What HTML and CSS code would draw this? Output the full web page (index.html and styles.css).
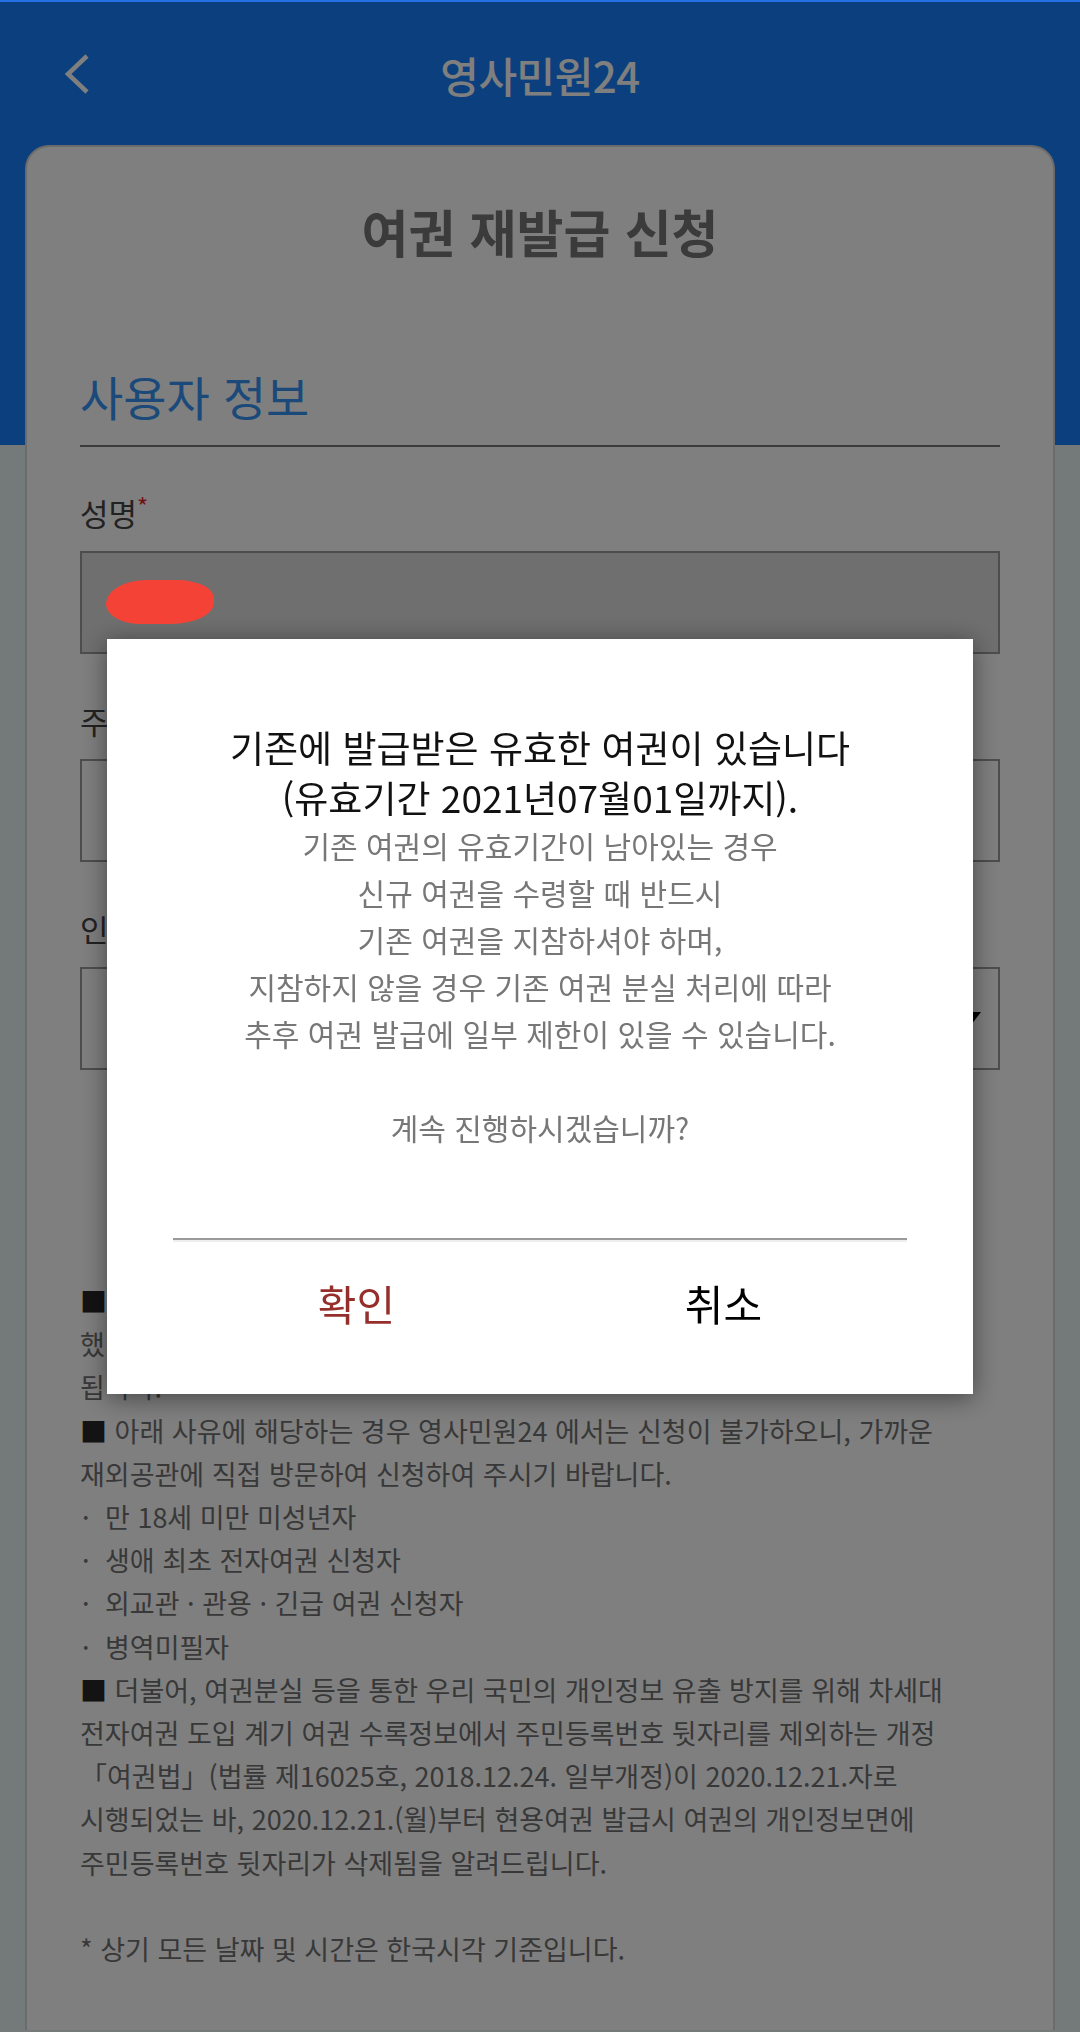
FILE: index.html
```html
<!DOCTYPE html>
<html lang="ko">
<head>
    <meta charset="utf-8">
    <title>영사민원24 - 여권 재발급 신청</title>
    <link rel="stylesheet" href="styles.css">
</head>
<body>
    <div class="status-line"></div>
    <div class="header">
        <div class="nav">
            <a class="back" href="#">
                <svg width="26" height="40" viewBox="0 0 26 40"><polyline points="23,2 4,20 23,38" fill="none" stroke="#fff" stroke-width="4.5"/></svg>
            </a>
            <h1>영사민원24</h1>
            <span></span>
        </div>
    </div>

    <div class="card">
        <h2 class="page-title">여권 재발급 신청</h2>
        <h3 class="section-title">사용자 정보</h3>

        <div class="field">
            <label>성명<span class="req">*</span></label>
            <div class="input readonly"><span class="redact"></span></div>
        </div>
        <div class="field">
            <label>주민등록번호<span class="req">*</span></label>
            <div class="input"></div>
        </div>
        <div class="field">
            <label>인증 수단<span class="req">*</span></label>
            <div class="input select"><span class="arrow"></span></div>
        </div>

        <div class="notice">
            <span class="sq">■</span> 기존 여권의 유효기간이 남아 있는 상태에서 재발급 신청하시는 경우, 신청<br>
            했던 내용과 다르게 기존 여권을 지참하지 않으면 기존 여권은 분실 처리되게<br>
            됩니다.<br>
            <span class="sq">■</span> 아래 사유에 해당하는 경우 영사민원24 에서는 신청이 불가하오니, 가까운<br>
            재외공관에 직접 방문하여 신청하여 주시기 바랍니다.<br>
            <span class="dot">·</span>만 18세 미만 미성년자<br>
            <span class="dot">·</span>생애 최초 전자여권 신청자<br>
            <span class="dot">·</span>외교관 · 관용 · 긴급 여권 신청자<br>
            <span class="dot">·</span>병역미필자<br>
            <span class="sq">■</span> 더불어, 여권분실 등을 통한 우리 국민의 개인정보 유출 방지를 위해 차세대<br>
            전자여권 도입 계기 여권 수록정보에서 주민등록번호 뒷자리를 제외하는 개정<br>
            「여권법」(법률 제16025호, 2018.12.24. 일부개정)이 2020.12.21.자로<br>
            시행되었는 바, 2020.12.21.(월)부터 현용여권 발급시 여권의 개인정보면에<br>
            주민등록번호 뒷자리가 삭제됨을 알려드립니다.<br>
            <br>
            * 상기 모든 날짜 및 시간은 한국시각 기준입니다.
        </div>
    </div>

    <div class="dim">
        <div class="dialog">
            <p class="alert-main">기존에 발급받은 유효한 여권이 있습니다<br>(유효기간 2021년07월01일까지).</p>
            <p class="alert-sub">
                기존 여권의 유효기간이 남아있는 경우<br>
                신규 여권을 수령할 때 반드시<br>
                기존 여권을 지참하셔야 하며,<br>
                지참하지 않을 경우 기존 여권 분실 처리에 따라<br>
                추후 여권 발급에 일부 제한이 있을 수 있습니다.<br>
                <br>
                계속 진행하시겠습니까?
            </p>
            <hr>
            <div class="dialog-buttons">
                <button class="ok">확인</button>
                <button class="cancel">취소</button>
            </div>
        </div>
    </div>
</body>
</html>
```

FILE: styles.css
```css
body { margin: 0; font-family: "Noto Sans CJK KR", "Noto Sans", sans-serif; background-color: #e8f3f3; color: #444; }
h1, h2, h3, p { margin: 0; }

.status-line { position: relative; z-index: 20; height: 2px; background-color: #2570e4; }
.header { height: 443px; background-color: #187efa; }
.nav { height: 143px; padding-top: 1px; box-sizing: border-box; display: grid; grid-template-columns: 1fr auto 1fr; align-items: center; }
.back { padding-left: 64px; display: flex; }
.nav h1 { font-size: 42px; font-weight: 500; color: #fff; letter-spacing: -0.5px; }

.card {
    margin: -300px 25px 0;
    padding: 54px 53px 60px;
    background-color: #fff;
    border: 2px solid #d6d6d6;
    border-bottom: none;
    border-radius: 24px 24px 0 0;
}
.page-title { text-align: center; font-size: 51px; line-height: 60px; font-weight: 700; color: #767676; }
.section-title {
    margin-top: 105px;
    padding-bottom: 19px;
    border-bottom: 2px solid #767676;
    font-size: 47px;
    line-height: 60px;
    font-weight: 400;
    color: #3493f5;
}

.field { margin-top: 45px; }
.field:first-of-type { margin-top: 44px; }
.field label { display: block; font-size: 31px; line-height: 44px; color: #454545; }
.req { color: #e82424; font-size: 24px; vertical-align: top; line-height: 30px; }
.input {
    margin-top: 16px;
    height: 103px;
    box-sizing: border-box;
    border: 2px solid #9b9b9b;
    background-color: #fff;
    display: flex;
    align-items: center;
    padding: 0 24px;
}
.input.readonly { background-color: #dedede; }
.redact {
    position: relative;
    z-index: 20;
    width: 108px;
    height: 44px;
    margin-top: -2px;
    background-color: #f44336;
    border-radius: 40% 36% 42% 34% / 58% 44% 52% 48%;
}
.select { justify-content: flex-end; padding-right: 17px; }
.arrow { width: 0; height: 0; border-left: 10px solid transparent; border-right: 10px solid transparent; border-top: 13px solid #000; }

.notice { margin-top: 209px; font-size: 27px; line-height: 43.2px; color: #717171; }
.notice .sq { color: #262626; }
.notice .dot { display: inline-block; width: 25px; padding-left: 2px; box-sizing: border-box; }

.dim {
    position: fixed;
    top: 0; left: 0; right: 0; bottom: 0;
    z-index: 10;
    background-color: rgba(0, 0, 0, 0.5);
    display: flex;
    align-items: center;
    justify-content: center;
}
.dialog {
    width: 866px;
    box-sizing: border-box;
    padding: 83px 66px 30px;
    background-color: #fff;
    box-shadow: 0 4px 24px rgba(0, 0, 0, 0.45);
    text-align: center;
}
.alert-main { font-size: 37px; line-height: 50px; color: #111; }
.alert-sub { font-size: 30px; line-height: 47px; color: #777; }
.dialog hr { margin: 87px 0 0; height: 0; border: none; border-top: 2px solid #9a9a9a; border-bottom: 2px solid #eee; }
.dialog-buttons { display: flex; height: 122px; }
.dialog-buttons button {
    flex: 1;
    background: none;
    border: none;
    padding: 0;
    font-family: "Noto Sans CJK KR", sans-serif;
    font-size: 42px;
    cursor: pointer;
}
.dialog-buttons .ok { color: #952f2b; }
.dialog-buttons .cancel { color: #000; }
```
